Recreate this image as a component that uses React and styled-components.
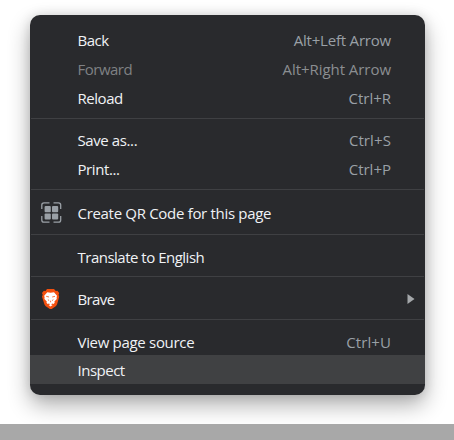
import React from "react";
import styled, { createGlobalStyle } from "styled-components";

const GlobalStyle = createGlobalStyle`
  * { box-sizing: border-box; }
  body { margin: 0; background: #fff; overflow: hidden; }
`;

const Page = styled.main`
  height: 440px;
  display: flex;
  flex-direction: column;
  justify-content: space-between;
  background: #fff;
  font-family: "Open Sans", "Noto Sans", sans-serif;
`;

const Menu = styled.div`
  width: 395px;
  height: 380px;
  margin: 15px 0 0 30px;
  padding: 11px 0;
  border-radius: 10px;
  overflow: hidden;
  background: #292a2d;
  box-shadow: 0 10px 22px rgba(0, 0, 0, 0.32), 0 0 12px rgba(0, 0, 0, 0.12);
`;

const Footer = styled.div`
  height: 16px;
  background: #a8a8a8;
  position: relative;
`;

const Item = styled.div`
  display: grid;
  grid-template-columns: 47px 1fr auto;
  align-items: center;
  height: 29px;
  padding: ${(p) => p.$top || 0}px ${(p) => (p.$submenu ? 10 : 34)}px ${(p) => (p.$top === undefined ? 2 : 0)}px 0;
  background: ${(p) => (p.$active ? "#404143" : "transparent")};
  color: ${(p) => (p.$disabled ? "#7f8184" : "#f0f2f5")};
  font-size: 15px;
  line-height: 20px;
  white-space: nowrap;
`;

const Icon = styled.span`
  display: flex;
  padding-left: 11px;
`;

const Label = styled.span`
  padding-left: 0.5px;
  letter-spacing: ${(p) => p.$spacing || 0}px;
`;

const Shortcut = styled.span`
  color: ${(p) => (p.$dim ? "#8b8e91" : "#9aa0a6")};
  letter-spacing: ${(p) => p.$spacing || 0}px;
`;

const Arrow = styled.svg`
  display: block;
`;

const Separator = styled.div`
  height: 1px;
  margin: ${(p) => p.$before}px 1px ${(p) => p.$after}px;
  background: #3f4043;
`;

const QrIcon = () => (
  <svg width="21" height="21" viewBox="0 0 21 21" fill="none">
    <path
      d="M.8 7V3Q.8.8 3 .8H8.5M12.5 .8h5q2.2 0 2.2 2.2v4M19.7 14v4q0 2.2-2.2 2.2h-5M8.5 20.2H3Q.8 20.2.8 18v-4"
      stroke="#9aa0a6"
      strokeWidth="1.3"
    />
    <g fill="#9aa0a6">
      <rect x="3.6" y="4" width="6.2" height="6.2" rx="1" />
      <rect x="11" y="4" width="6.2" height="6.2" rx="1" />
      <rect x="3.6" y="11.4" width="6.2" height="6.2" rx="1" />
      <rect x="11" y="11.4" width="6.2" height="6.2" rx="1" />
    </g>
  </svg>
);

const BraveIcon = () => (
  <svg width="20" height="20" viewBox="0 0 20 20">
    <path
      d="M6 0h7l1.8 2 1.6-.2L18.2 4l-.6 1.8.6 2-2.1 7.5q-.4 1.2-1.4 2L10.7 20H8.8l-4-2.7q-1-.8-1.4-2L1 7.8l.7-2L1 4l1.9-2.2 1.6.2z"
      fill="#f3500f"
    />
    <path
      d="M6.3 3.3l3.3.5 3.4-.5 3 3.4-.4 1.8.2 1.4-2.4 2.5.3 1.4-1.2 1.2-1.3-.6-1.6 1.3-1.6-1.3-1.3.6-1.2-1.2.3-1.4-2.4-2.5.2-1.4-.4-1.8zM9.6 14.9l2 1.1-2 1.6-2-1.6z"
      fill="#fff"
    />
    <path
      d="M5.2 7.3l2.8.7M14 7.3l-2.8.7M9.6 11.7v1.6M6.9 10.6l1.2 1M12.3 10.6l-1.2 1"
      fill="none"
      stroke="#f3500f"
      strokeWidth=".8"
    />
  </svg>
);

function Entry({ label, keys, icon, spacing, keySpacing, disabled, active, submenu, top }) {
  return (
    <Item $disabled={disabled} $active={active} $submenu={submenu} $top={top} role="menuitem">
      <Icon>{icon}</Icon>
      <Label $spacing={spacing}>{label}</Label>
      {keys && <Shortcut $dim={disabled} $spacing={keySpacing}>{keys}</Shortcut>}
      {submenu && (
        <Arrow width="8" height="10" viewBox="0 0 8 10">
          <path d="M.5 0L7.5 5 .5 10z" fill="#a4a7aa" />
        </Arrow>
      )}
    </Item>
  );
}

export default function App() {
  return (
    <>
      <GlobalStyle />
      <Page>
        <Menu role="menu">
          <Entry label="Back" keys="Alt+Left Arrow" spacing={-0.5} keySpacing={-0.2} />
          <Entry label="Forward" keys="Alt+Right Arrow" spacing={-0.5} keySpacing={-0.05} disabled />
          <Entry label="Reload" keys="Ctrl+R" spacing={-0.45} />
          <Separator $before={5} $after={7} />
          <Entry label="Save as..." keys="Ctrl+S" spacing={-0.4} keySpacing={0.1} />
          <Entry label="Print..." keys="Ctrl+P" spacing={-0.4} />
          <Separator $before={5} $after={9} />
          <Entry label="Create QR Code for this page" icon={<QrIcon />} spacing={-0.31} />
          <Separator $before={6} $after={8} />
          <Entry label="Translate to English" spacing={-0.5} />
          <Separator $before={4} $after={8} />
          <Entry label="Brave" icon={<BraveIcon />} spacing={-0.6} submenu />
          <Separator $before={5} $after={6} />
          <Entry label="View page source" keys="Ctrl+U" spacing={-0.31} keySpacing={0.1} top={2} />
          <Entry label="Inspect" spacing={-0.5} active top={0} />
        </Menu>
        <Footer />
      </Page>
    </>
  );
}
